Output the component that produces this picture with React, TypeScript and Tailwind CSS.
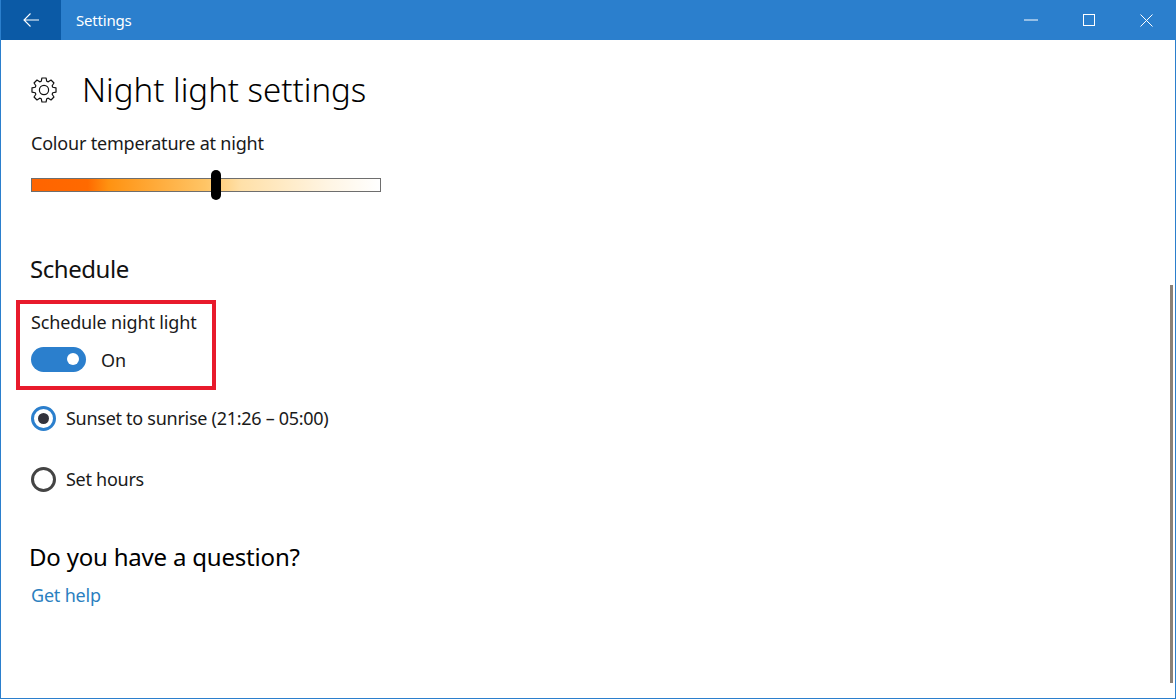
// 8 tooth gear outline for the page heading
const gearPath = Array.from({ length: 8 }, (_, i) => {
  const a = (i * Math.PI) / 4;
  const pt = (r: number, d: number) =>
    `${(13 + r * Math.sin(a + d)).toFixed(2)} ${(13 - r * Math.cos(a + d)).toFixed(2)}`;
  return `${i === 0 ? 'M' : 'L'}${pt(9.2, -0.3)}L${pt(12.2, -0.17)}L${pt(12.2, 0.17)}L${pt(9.2, 0.3)}`;
}).join('') + 'Z';

function RadioRow({ label, checked }: { label: string; checked?: boolean }) {
  return (
    <div className="flex items-center gap-[10px] h-[26px]">
      {checked ? (
        <div className="w-[25px] h-[25px] rounded-full border-[3px] border-[#2b7fcd] flex items-center justify-center">
          <div className="w-[11px] h-[11px] rounded-full bg-[#33333d]" />
        </div>
      ) : (
        <div className="w-[25px] h-[25px] rounded-full border-[3px] border-[#444444]" />
      )}
      <span className="text-[18px] leading-[26px] text-[#1a1a1a]">{label}</span>
    </div>
  );
}

export default function App() {
  return (
    <div className="relative w-[1176px] h-[699px] overflow-hidden bg-white border-x border-b border-[#2b7fcd] font-['Noto_Sans',sans-serif] text-black">
      {/* title bar */}
      <div className="flex items-center h-10 -mx-px bg-[#2b7fcd] text-white">
        <div className="flex items-center justify-center w-[61px] h-10 bg-[#0b5aa6]">
          <svg width="16" height="14" viewBox="0 0 16 14" fill="none" stroke="currentColor" strokeWidth="1.1">
            <path d="M16 7H1M7.5 0.5L1 7l6.5 6.5" />
          </svg>
        </div>
        <span className="ml-[15px] text-[15px] tracking-[-0.2px]">Settings</span>
        <div className="flex items-center ml-auto">
          <div className="flex justify-center w-[62px]">
            <svg width="14" height="2" viewBox="0 0 14 2" fill="none" stroke="currentColor" strokeWidth="1">
              <path d="M0 1h14" />
            </svg>
          </div>
          <div className="flex justify-center w-[54px]">
            <svg width="12" height="12" viewBox="0 0 12 12" fill="none" stroke="currentColor" strokeWidth="1">
              <rect x="0.5" y="0.5" width="11" height="11" />
            </svg>
          </div>
          <div className="flex justify-center w-[60px]">
            <svg width="13" height="13" viewBox="0 0 13 13" fill="none" stroke="currentColor" strokeWidth="1">
              <path d="M0.5 0.5l12 12M12.5 0.5l-12 12" />
            </svg>
          </div>
        </div>
      </div>

      <div className="pl-[29px]">
        <div className="flex items-center h-[42px] mt-[29px]">
          <svg width="26" height="26" viewBox="0 0 26 26" fill="none" stroke="#111111" strokeWidth="1.2" strokeLinejoin="round" className="ml-px">
            <path d={gearPath} />
            <circle cx="13" cy="13" r="4.6" />
          </svg>
          <h1 className="ml-[25px] text-[33px] font-light leading-[42px]">Night light settings</h1>
        </div>

        <p className="mt-[19px] ml-px text-[18px] leading-[26px] tracking-[-0.2px] text-[#1a1a1a]">Colour temperature at night</p>

        {/* slider */}
        <div className="relative mt-[22px] ml-px w-[350px] h-[14px] border border-[#6e6e6e] bg-[linear-gradient(to_right,#ff6400_0%,#ff6a00_16%,#ff9211_22%,#ffc566_50%,#ffe0a8_60%,#fff5e3_85%,#ffffff_100%)]">
          <div className="absolute left-[179px] -top-[9px] w-[10px] h-[30px] rounded-full bg-black" />
        </div>

        <h2 className="mt-[61px] text-[24px] leading-[32px] tracking-[-0.45px] text-[#111111]">Schedule</h2>

        {/* highlighted toggle */}
        <div className="relative -ml-[14px] mt-[15px] w-[200px] h-[90px] border-[4px] border-[#e81a2c] pl-[11px]">
          <p className="mt-[5px] text-[18px] leading-[26px] tracking-[-0.15px] text-[#1a1a1a]">Schedule night light</p>
          <div className="flex items-center mt-[10px]">
            <div className="flex items-center justify-end w-[55px] h-[25px] pr-[7px] rounded-full bg-[#2b7fcd]">
              <div className="w-[12px] h-[12px] rounded-full bg-white" />
            </div>
            <span className="ml-[15px] pt-[2px] text-[18px] leading-[26px] text-[#1a1a1a]">On</span>
          </div>
        </div>

        <div className="ml-px mt-[15px] flex flex-col gap-[35px] tracking-[-0.28px]">
          <RadioRow label="Sunset to sunrise (21:26 – 05:00)" checked />
          <RadioRow label="Set hours" />
        </div>

        <h2 className="-ml-px mt-[49px] text-[24px] leading-[32px] tracking-[-0.2px]">Do you have a question?</h2>
        <a className="block mt-[9px] ml-px text-[18px] leading-[26px] tracking-[-0.2px] text-[#2b7fbf]">Get help</a>
      </div>

      {/* scrollbar */}
      <div className="absolute right-[2px] top-[285px] w-[3px] h-[398px] bg-[#8a8178]" />
    </div>
  );
}
